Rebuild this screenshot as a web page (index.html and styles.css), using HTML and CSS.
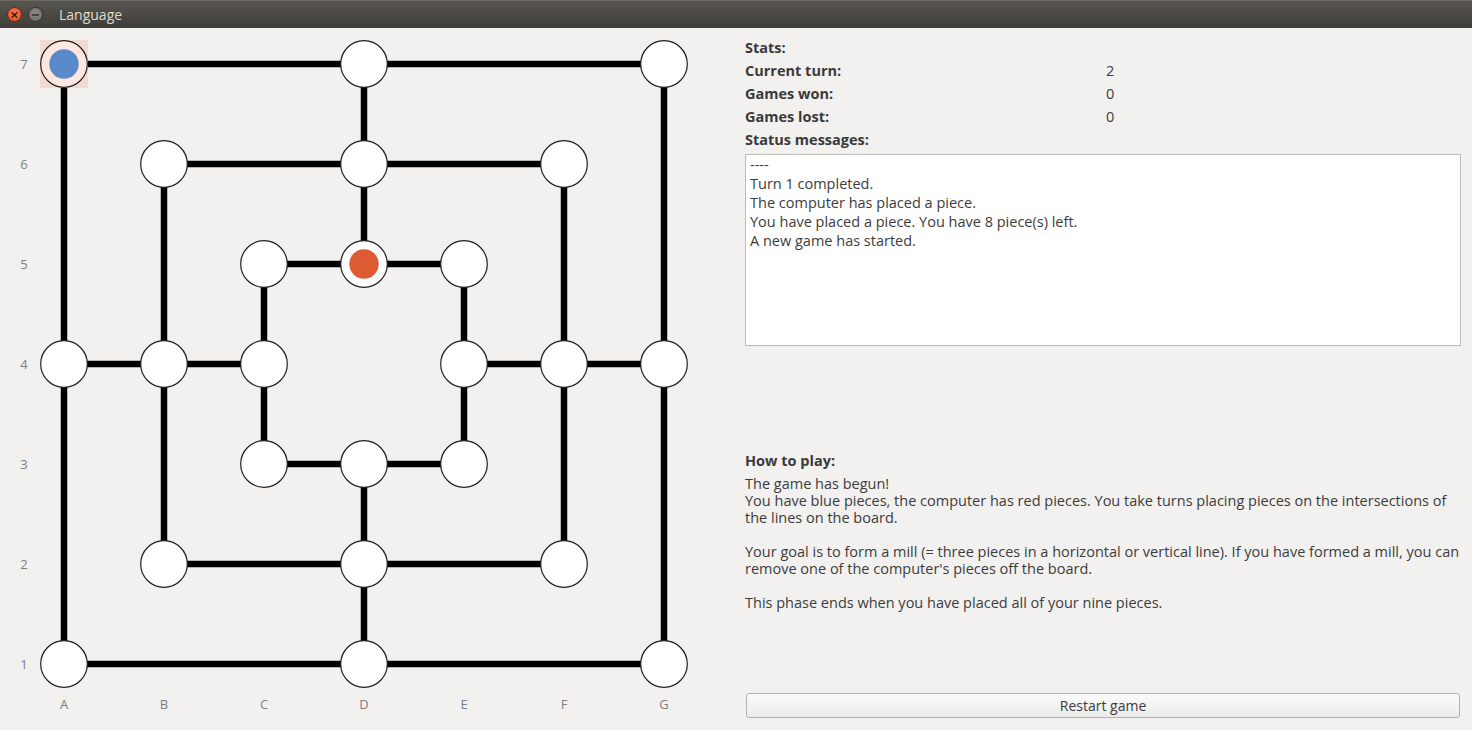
FILE: index.html
```html
<!DOCTYPE html>
<html>
<head>
<meta charset="utf-8">
<title>Language</title>
<link rel="stylesheet" href="styles.css">
</head>
<body>
<div class="window">
  <header class="titlebar">
    <div class="wbtn close"><svg width="14" height="14" viewBox="0 0 14 14"><path d="M4.5 4.5 L9.5 9.5 M9.5 4.5 L4.5 9.5" stroke="#3a1a10" stroke-width="1.5" stroke-linecap="round"/></svg></div>
    <div class="wbtn min"><svg width="14" height="14" viewBox="0 0 14 14"><path d="M4 7 H10" stroke="#2e2d2a" stroke-width="1.6" stroke-linecap="round"/></svg></div>
    <span class="title">Language</span>
  </header>
  <main class="content">
    <section class="board">
      <svg class="board-svg" width="720" height="702" viewBox="0 0 720 702">
        <g stroke="#000" stroke-width="6.5" fill="none">
          <rect x="64" y="36" width="600" height="600"/>
          <rect x="164" y="136" width="400" height="400"/>
          <rect x="264" y="236" width="200" height="200"/>
          <line x1="364" y1="36" x2="364" y2="236"/>
          <line x1="364" y1="436" x2="364" y2="636"/>
          <line x1="64" y1="336" x2="264" y2="336"/>
          <line x1="464" y1="336" x2="664" y2="336"/>
        </g>
        <rect x="40" y="12" width="48" height="48" fill="#f4dbd2"/>
        <g stroke="#1e1e1e" stroke-width="1.2" fill="#ffffff">
          <circle cx="64" cy="36" r="23.3" fill="#fde7e0"/>
          <circle cx="364" cy="36" r="23.3"/>
          <circle cx="664" cy="36" r="23.3"/>
          <circle cx="164" cy="136" r="23.3"/>
          <circle cx="364" cy="136" r="23.3"/>
          <circle cx="564" cy="136" r="23.3"/>
          <circle cx="264" cy="236" r="23.3"/>
          <circle cx="364" cy="236" r="23.3"/>
          <circle cx="464" cy="236" r="23.3"/>
          <circle cx="64" cy="336" r="23.3"/>
          <circle cx="164" cy="336" r="23.3"/>
          <circle cx="264" cy="336" r="23.3"/>
          <circle cx="464" cy="336" r="23.3"/>
          <circle cx="564" cy="336" r="23.3"/>
          <circle cx="664" cy="336" r="23.3"/>
          <circle cx="264" cy="436" r="23.3"/>
          <circle cx="364" cy="436" r="23.3"/>
          <circle cx="464" cy="436" r="23.3"/>
          <circle cx="164" cy="536" r="23.3"/>
          <circle cx="364" cy="536" r="23.3"/>
          <circle cx="564" cy="536" r="23.3"/>
          <circle cx="64" cy="636" r="23.3"/>
          <circle cx="364" cy="636" r="23.3"/>
          <circle cx="664" cy="636" r="23.3"/>
        </g>
        <circle cx="64" cy="36" r="14.7" fill="#5b8acb"/>
        <circle cx="364" cy="236" r="14.7" fill="#dc5b33"/>
        <g class="lbl" text-anchor="middle">
          <text x="24" y="41">7</text>
          <text x="24" y="141">6</text>
          <text x="24" y="241">5</text>
          <text x="24" y="341">4</text>
          <text x="24" y="441">3</text>
          <text x="24" y="541">2</text>
          <text x="24" y="641">1</text>
          <text x="64" y="681">A</text>
          <text x="164" y="681">B</text>
          <text x="264" y="681">C</text>
          <text x="364" y="681">D</text>
          <text x="464" y="681">E</text>
          <text x="564" y="681">F</text>
          <text x="664" y="681">G</text>
        </g>
      </svg>
    </section>
    <section class="panel">
      <div class="stats">
        <div class="bold">Stats:</div><div></div>
        <div class="bold">Current turn:</div><div>2</div>
        <div class="bold">Games won:</div><div>0</div>
        <div class="bold">Games lost:</div><div>0</div>
        <div class="bold">Status messages:</div><div></div>
      </div>
      <div class="messages">
        <div>----</div>
        <div>Turn 1 completed.</div>
        <div>The computer has placed a piece.</div>
        <div>You have placed a piece. You have 8 piece(s) left.</div>
        <div>A new game has started.</div>
      </div>
      <div class="spacer"></div>
      <div class="howto">
        <div class="bold howto-title">How to play:</div>
        <p>The game has begun!<br>You have blue pieces, the computer has red pieces. You take turns placing pieces on the intersections of the lines on the board.</p>
        <p>Your goal is to form a mill (= three pieces in a horizontal or vertical line). If you have formed a mill, you can remove one of the computer's pieces off the board.</p>
        <p>This phase ends when you have placed all of your nine pieces.</p>
      </div>
      <div class="spacer2"></div>
      <button class="restart">Restart game</button>
    </section>
  </main>
</div>
</body>
</html>
```

FILE: styles.css
```css
* { box-sizing: border-box; }
html, body { margin: 0; padding: 0; }
body {
  width: 1472px;
  height: 730px;
  overflow: hidden;
  background: #f2f1f0;
  font-family: "Open Sans", "DejaVu Sans", sans-serif;
  font-size: 14.5px;
  color: #3c3c3c;
}
.window { display: flex; flex-direction: column; height: 730px; }
.titlebar {
  height: 28px;
  flex: none;
  display: flex;
  align-items: center;
  background: linear-gradient(#57554f, #3e3d39);
  border-top: 1px solid #6b6962;
  padding-left: 7px;
}
.wbtn {
  width: 15px; height: 15px; border-radius: 50%;
  display: flex; align-items: center; justify-content: center;
  margin-right: 6px;
}
.wbtn svg { width: 14px; height: 14px; }
.close { background: radial-gradient(circle at 50% 40%, #f37a4d, #df4a1d); border: 1px solid #6a2a14; }
.min { background: radial-gradient(circle at 50% 40%, #8b8a85, #6b6a65); border: 1px solid #34332f; }
.title { color: #dfdbd2; font-size: 14px; margin-left: 10px; }
.content { flex: 1; display: flex; }
.board { width: 720px; flex: none; }
.board-svg { display: block; }
.lbl text { font-family: "Open Sans", "DejaVu Sans", sans-serif; font-size: 13px; fill: #7d7d86; }
.panel {
  flex: 1;
  display: flex;
  flex-direction: column;
  padding: 10px 11px 12px 25px;
}
.bold { font-weight: 700; color: #3a3a3a; }
.stats {
  display: grid;
  grid-template-columns: 361px 1fr;
  row-gap: 4px;
  line-height: 19px;
}
.messages {
  margin-top: 5px;
  height: 192px;
  background: #fff;
  border: 1px solid #bebbb5;
  padding: 0 4px;
  line-height: 19px;
}
.spacer { height: 106px; }
.howto { line-height: 17px; }
.howto-title { margin-bottom: 6px; }
.howto p { margin: 0 0 17px 0; }
.spacer2 { flex: 1; }
.restart {
  height: 25px;
  margin-left: 1px;
  margin-right: 1px;
  font-family: inherit;
  font-size: 14px;
  color: #3c3c3c;
  background: linear-gradient(#fafafa, #ececeb);
  border: 1px solid #b5b2ac;
  border-radius: 3px;
}
```
